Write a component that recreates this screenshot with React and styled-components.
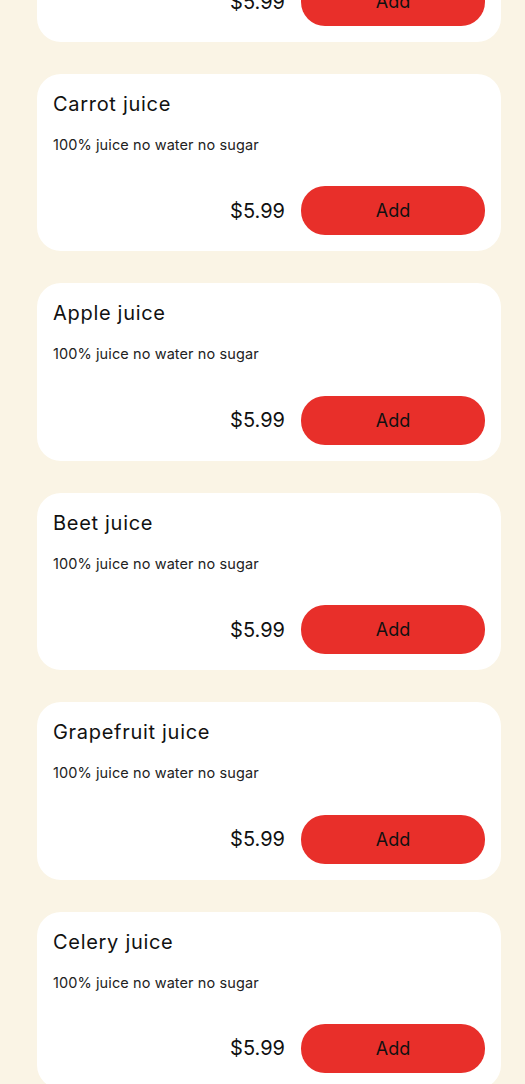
import React from 'react';
import styled, { createGlobalStyle } from 'styled-components';

const GlobalStyle = createGlobalStyle`
	html, body {
		margin: 0;
		padding: 0;
		background: #faf4e5;
		font-family: Inter, "Noto Sans", sans-serif;
	}
`

const Menu = styled.div`
	display: flex;
	flex-direction: column;
	gap: 32px;
	width: 464px;
	margin-top: -135.4px;
	padding: 0 0 40px 37px;
`

const Card = styled.div`
	background: #ffffff;
	border-radius: 24px;
	padding: 16px;
	display: flex;
	flex-direction: column;
`

const Title = styled.h3`
	margin: 0;
	font-size: 20px;
	line-height: 28px;
	font-weight: 400;
	letter-spacing: 0.7px;
	color: #111;
`

const Desc = styled.p`
	margin: 16px 0 0;
	font-size: 14.5px;
	line-height: 22px;
	letter-spacing: 0.1px;
	color: #222;
`

const Row = styled.div`
	margin-top: 30.4px;
	display: flex;
	justify-content: flex-end;
	align-items: center;
	gap: 16px;
`

const Price = styled.span`
	font-size: 20px;
	color: #111;
`

const AddButton = styled.button`
	width: 184px;
	height: 49px;
	border: none;
	border-radius: 24px;
	background: #e82f2a;
	color: #111;
	font-family: inherit;
	font-size: 18px;
	cursor: pointer;
`

const juices = ['Orange juice', 'Carrot juice', 'Apple juice', 'Beet juice', 'Grapefruit juice', 'Celery juice'];

export default function App() {
	return (
		<>
			<GlobalStyle />
			<Menu>
				{juices.map(name => (
					<Card key={name}>
						<Title>{name}</Title>
						<Desc>100% juice no water no sugar</Desc>
						<Row>
							<Price>$5.99</Price>
							<AddButton>Add</AddButton>
						</Row>
					</Card>
				))}
			</Menu>
		</>
	);
}
